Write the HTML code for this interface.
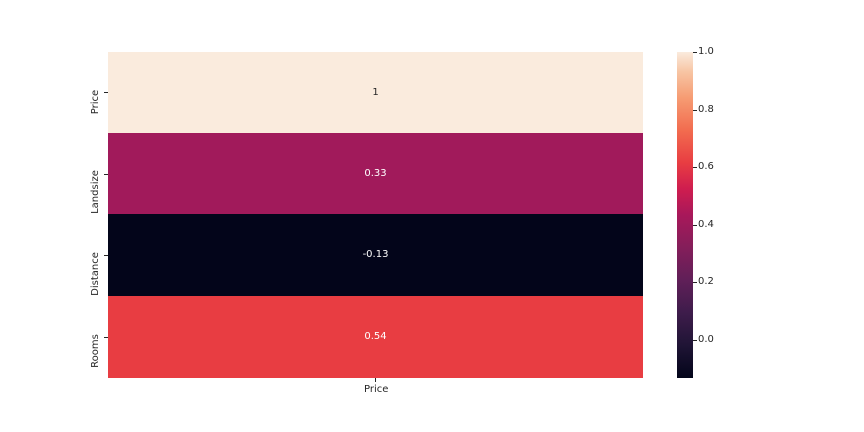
<!DOCTYPE html>
<html><head><meta charset="utf-8"><style>
body{margin:0;background:#fff;width:864px;height:432px;position:relative;overflow:hidden;font-family:"DejaVu Sans","Liberation Sans",sans-serif;font-size:10px;color:#262626}
.c{position:absolute;left:108px;width:535px}
.v{position:absolute;width:535px;left:108px;text-align:center;line-height:12px}
.yl{position:absolute;left:96px;transform:translate(-50%,-50%) rotate(-90deg);white-space:nowrap;line-height:12px}
.tk{position:absolute;background:#262626}
.cl{position:absolute;left:698px;line-height:12px;transform:translateY(-50%)}
</style></head><body>
<div class="c" style="top:52px;height:81px;background:#faebdd"></div>
<div class="c" style="top:133px;height:81px;background:#a11a5b"></div>
<div class="c" style="top:214px;height:82px;background:#03051a"></div>
<div class="c" style="top:296px;height:82px;background:#e83d42"></div>
<div class="v" style="top:87px;color:#262626">1</div>
<div class="v" style="top:168px;color:#fff">0.33</div>
<div class="v" style="top:249px;color:#fff">-0.13</div>
<div class="v" style="top:331px;color:#fff">0.54</div>
<div class="yl" style="top:102px">Price</div>
<div class="yl" style="top:192px">Landsize</div>
<div class="yl" style="top:274px">Distance</div>
<div class="yl" style="top:351px">Rooms</div>
<div class="tk" style="left:104px;top:92px;width:4px;height:1px"></div>
<div class="tk" style="left:104px;top:174px;width:4px;height:1px"></div>
<div class="tk" style="left:104px;top:255px;width:4px;height:1px"></div>
<div class="tk" style="left:104px;top:337px;width:4px;height:1px"></div>
<div class="tk" style="left:375px;top:378px;width:1px;height:4px"></div>
<div style="position:absolute;left:364px;top:384px">Price</div>
<div style="position:absolute;left:677px;top:52px;width:16px;height:326px;background:linear-gradient(to top,#03051a 0%,#1f1435 10%,#3e1c4b 20%,#601f58 30%,#841e5a 40%,#a8185a 50%,#cf1d4f 58%,#e83d42 66%,#f26c4f 76%,#f69c73 86%,#f7c5a4 94%,#faebdd 100%)"></div>
<div class="tk" style="left:693px;top:52px;width:4px;height:1px"></div>
<div class="tk" style="left:693px;top:110px;width:4px;height:1px"></div>
<div class="tk" style="left:693px;top:167px;width:4px;height:1px"></div>
<div class="tk" style="left:693px;top:225px;width:4px;height:1px"></div>
<div class="tk" style="left:693px;top:282px;width:4px;height:1px"></div>
<div class="tk" style="left:693px;top:340px;width:4px;height:1px"></div>
<div class="cl" style="top:52px">1.0</div>
<div class="cl" style="top:110px">0.8</div>
<div class="cl" style="top:167px">0.6</div>
<div class="cl" style="top:225px">0.4</div>
<div class="cl" style="top:282px">0.2</div>
<div class="cl" style="top:340px">0.0</div>
</body></html>
